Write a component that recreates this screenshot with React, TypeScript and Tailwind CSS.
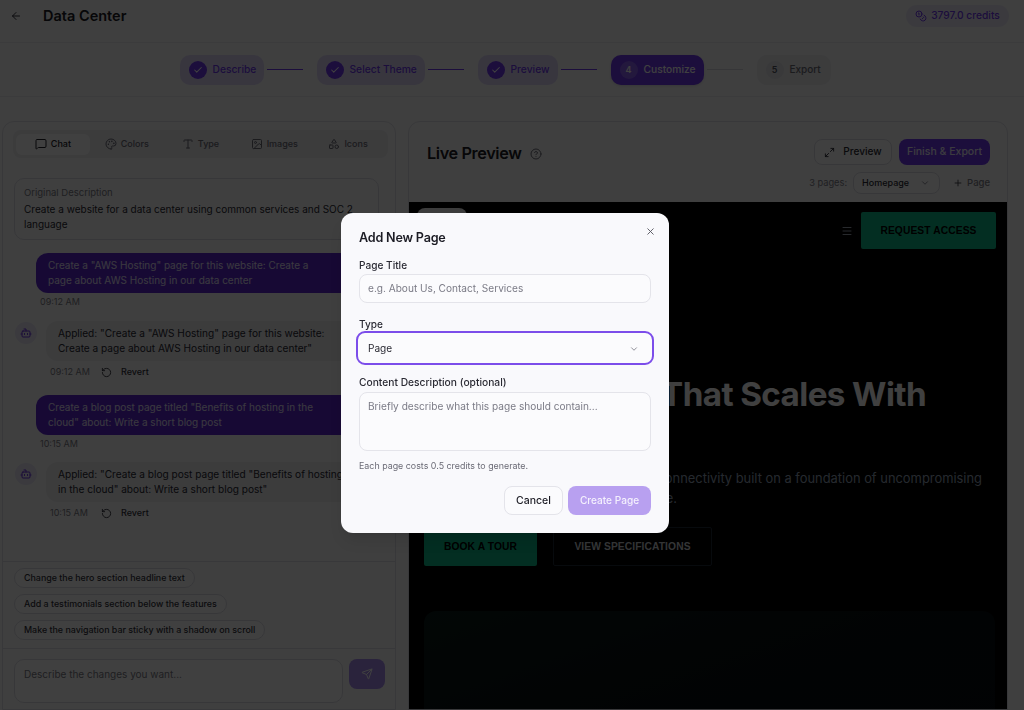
import { ArrowLeft, Bot, Check, ChevronDown, CircleHelp, Coins, Image, Maximize2, Menu, MessageSquare, Palette, Plus, RotateCcw, Send, Shapes, Type, X } from "lucide-react";

const TABS = [
  { label: "Chat", icon: MessageSquare },
  { label: "Colors", icon: Palette },
  { label: "Type", icon: Type },
  { label: "Images", icon: Image },
  { label: "Icons", icon: Shapes },
];

const STEPS = [
  { n: 1, label: "Describe", state: "done", width: "w-[84px]" },
  { n: 2, label: "Select Theme", state: "done", width: "w-[108px]" },
  { n: 3, label: "Preview", state: "done", width: "w-[80px]" },
  { n: 4, label: "Customize", state: "active", width: "w-[93px]" },
  { n: 5, label: "Export", state: "todo", width: "w-[74px]" },
];

const SUGGESTIONS = [
  "Change the hero section headline text",
  "Add a testimonials section below the features",
  "Make the navigation bar sticky with a shadow on scroll",
];

function Stepper() {
  return (
    <div className="flex h-[54px] items-center justify-center border-b border-[#ececf0] pr-[14px]">
      {STEPS.map((step, i) => (
        <div key={step.n} className="flex items-center">
          <div
            className={
              "flex h-[30px] items-center gap-[6px] rounded-[10px] pl-[9px] font-medium " +
              step.width +
              (step.state === "done" ? " bg-[#dfd8f8] text-[10.25px] text-[#7038f0]" : "") +
              (step.state === "active" ? " bg-[#7038f0] text-[10.25px] text-white shadow-sm" : "") +
              (step.state === "todo" ? " bg-[#ededf0] text-[10px] text-[#6b6b76]" : "")
            }
          >
            {step.state === "done" ? (
              <span className="flex h-[18px] w-[18px] items-center justify-center rounded-full bg-[#7038f0] text-white">
                <Check size={10} strokeWidth={2.5} />
              </span>
            ) : (
              <span
                className={
                  "flex h-[18px] w-[18px] items-center justify-center rounded-full text-[9px] font-semibold " +
                  (step.state === "active" ? "bg-white/20 text-white" : "bg-[#e2e2e6] text-[#55555f]")
                }
              >
                {step.n}
              </span>
            )}
            {step.label}
          </div>
          {i < STEPS.length - 1 && (
            <div
              className={
                "ml-[3px] mr-[14px] h-px w-[36px] " + (i < 3 ? "bg-[#7038f0]" : "bg-[#d8d8de]")
              }
            />
          )}
        </div>
      ))}
    </div>
  );
}

function UserMessage({ lines, time }: { lines: string[]; time: string }) {
  return (
    <div className="ml-[21px] mr-[18px]">
      <div className="rounded-[12px] bg-[#5b27d0] px-[12px] py-[5px] text-[10px] leading-[15px] text-[#e9e2fb]">
        {lines.map((line) => (
          <div key={line}>{line}</div>
        ))}
      </div>
      <div className="mt-[3px] pl-[4px] text-[9px] leading-[12px] text-[#7b7b86]">{time}</div>
    </div>
  );
}

function BotMessage({ lines, time, className }: { lines: string[]; time: string; className: string }) {
  return (
    <div className={"flex gap-[9px] pr-[18px] " + className}>
      <div className="mt-px flex h-[22px] w-[22px] shrink-0 items-center justify-center rounded-full bg-[#e9e6f6] text-[#6a2fe0]">
        <Bot size={12} />
      </div>
      <div className="flex-1">
        <div className="rounded-[12px] bg-[#ededf0] px-[12px] py-[5px] text-[10.1px] leading-[15px] text-[#2a2a33]">
          {lines.map((line) => (
            <div key={line}>{line}</div>
          ))}
        </div>
        <div className="mt-[5px] flex items-center pl-[4px] text-[9px] leading-[12px] text-[#7b7b86]">
          <span className="w-[51px]">{time}</span>
          <RotateCcw size={11} className="text-[#33333c]" />
          <span className="ml-[9px] font-medium text-[#33333c]">Revert</span>
        </div>
      </div>
    </div>
  );
}

function ChatPanel() {
  return (
    <div className="ml-[2px] flex h-[589px] w-[394px] flex-col rounded-t-[12px] border border-[#e0e0e6] bg-[#fbfbfc]">
      <div className="px-[10px] pt-[8px]">
        <div className="grid h-[28px] w-[375px] grid-cols-5 items-center rounded-[8px] bg-[#ededf0] px-[3px]">
          {TABS.map(({ label, icon: Icon }, i) => (
            <div
              key={label}
              className={
                "flex h-[21px] items-center justify-center gap-[4px] rounded-[6px] text-[9px] font-medium " +
                (i === 0 ? "bg-white text-[#22222a]" : "text-[#6b6b76]")
              }
            >
              <Icon size={12} />
              {label}
            </div>
          ))}
        </div>
      </div>
      <div className="mx-[11px] mt-[20px] h-[62px] w-[365px] rounded-[10px] border border-[#dcdce4] px-[9px] pt-[7px]">
        <div className="text-[9.5px] leading-[14px] text-[#7b7b86]">Original Description</div>
        <div className="mt-[2px] text-[10px] leading-[15px] text-[#2a2a33]">
          Create a website for a data center using common services and SOC 2 language
        </div>
      </div>
      <div className="mt-[13px] flex flex-1 flex-col gap-[13px] pl-[12px]">
        <UserMessage
          time="09:12 AM"
          lines={['Create a "AWS Hosting" page for this website: Create a', "page about AWS Hosting in our data center"]}
        />
        <BotMessage
          className=""
          time="09:12 AM"
          lines={['Applied: "Create a "AWS Hosting" page for this website:', 'Create a page about AWS Hosting in our data center"']}
        />
        <div className="mt-[4px]">
          <UserMessage
            time="10:15 AM"
            lines={['Create a blog post page titled "Benefits of hosting in the', 'cloud" about: Write a short blog post']}
          />
        </div>
        <BotMessage
          className="-mt-px"
          time="10:15 AM"
          lines={['Applied: "Create a blog post page titled "Benefits of hosting', 'in the cloud" about: Write a short blog post"']}
        />
      </div>
      <div className="flex flex-col items-start gap-[6px] border-t border-[#e0e0e6] px-[11px] pb-[8px] pt-[6px]">
        {SUGGESTIONS.map((text) => (
          <div
            key={text}
            className="flex h-[20px] items-center rounded-full border border-[#dcdce4] bg-white px-[9px] text-[8.9px] font-medium text-[#33333c]"
          >
            {text}
          </div>
        ))}
      </div>
      <div className="flex h-[61px] gap-[6px] border-t border-[#e0e0e6] px-[11px] pt-[10px]">
        <div className="h-[44px] w-[329px] shrink-0 rounded-[10px] border border-[#dcdce4] bg-white px-[9px] pt-[7px] text-[10px] leading-[15px] text-[#7b7b86]">
          Describe the changes you want...
        </div>
        <div className="flex h-[30px] w-[36px] shrink-0 items-center justify-center rounded-[8px] bg-[#a68bef] text-white">
          <Send size={12} />
        </div>
      </div>
    </div>
  );
}

function PreviewPanel() {
  return (
    <div className="flex h-[589px] w-[600px] flex-col rounded-t-[12px] border border-[#e0e0e6] bg-[#fbfbfc]">
      <div className="flex h-[80px] justify-between pl-[18px] pr-[17px]">
        <div className="flex h-[63px] items-center gap-[9px]">
          <span className="text-[16.3px] font-semibold tracking-[-0.4px] text-[#1c1c24]">Live Preview</span>
          <CircleHelp size={12} className="text-[#6b6b76]" />
        </div>
        <div className="flex flex-col items-end pt-[17px]">
          <div className="flex gap-[7px]">
            <div className="flex h-[26px] w-[78px] items-center justify-center gap-[8px] rounded-[8px] border border-[#dcdce4] bg-white text-[10.1px] font-medium text-[#2a2a33]">
              <Maximize2 size={11} />
              Preview
            </div>
            <div className="flex h-[26px] w-[91px] items-center justify-center rounded-[8px] bg-[#7038f0] text-[10.5px] font-medium text-[#efeafc]">
              Finish &amp; Export
            </div>
          </div>
          <div className="mt-[7px] flex items-center text-[9.25px] text-[#7b7b86]">
            <span>3 pages:</span>
            <div className="ml-[6px] flex h-[22px] w-[87px] items-center justify-between rounded-[8px] border border-[#dcdce4] bg-white pl-[8px] pr-[9px] text-[9px] font-medium text-[#2a2a33]">
              Homepage
              <ChevronDown size={10} className="text-[#7b7b86]" />
            </div>
            <span className="ml-[13px] flex items-center gap-[4px] text-[9.5px] font-medium">
              <Plus size={10} className="text-[#33333c]" />
              Page
            </span>
          </div>
        </div>
      </div>
      <div className="relative flex-1 overflow-hidden bg-black">
        <div className="absolute left-[8px] top-[6px] h-[40px] w-[50px] rounded-[8px] bg-[#ededed]" />
        <div className="flex items-center justify-end pr-[11px] pt-[10px]">
          <Menu size={12} className="mr-[8px] text-[#9ca3af]" />
          <div className="flex h-[37px] w-[135px] items-center justify-center rounded-[2px] bg-[#0fb886] text-[10.25px] font-bold tracking-[0.1px] text-black [font-family:'Liberation_Sans',sans-serif]">
            REQUEST ACCESS
          </div>
        </div>
        <div className="ml-[28px] mt-[125px] whitespace-nowrap text-[33.2px] font-bold leading-[40px] tracking-[-0.6px] text-white">
          Infrastructure That Scales With
        </div>
        <div className="ml-[48px] mt-[55px] whitespace-nowrap text-[12.9px] leading-[20px] text-[#94a3b8]">
          <div>Enterprise colocation, cloud and connectivity built on a foundation of uncompromising</div>
          <div>security and operational excellence.</div>
        </div>
        <div className="ml-[15px] mt-[18px] flex gap-[16px] text-[10.25px] font-bold tracking-[0.1px] [font-family:'Liberation_Sans',sans-serif]">
          <div className="flex h-[39px] w-[113px] items-center justify-center rounded-[2px] bg-[#0fb886] text-black">
            BOOK A TOUR
          </div>
          <div className="flex h-[39px] w-[159px] items-center justify-center rounded-[2px] border border-[#1f2937] text-[#d1d5db]">
            VIEW SPECIFICATIONS
          </div>
        </div>
        <div className="ml-[15px] mr-[12px] mt-[45px] h-[200px] rounded-t-[12px] bg-gradient-to-br from-[#0a1a18] via-[#070d10] to-[#080a10]" />
      </div>
    </div>
  );
}

function AddPageModal() {
  return (
    <div className="absolute left-[341px] top-[213px] h-[320px] w-[328px] rounded-[12px] bg-[#f9f9fc] px-[18px] pt-[16px] text-[#1c1c24] shadow-lg">
      <X size={11} className="absolute right-[13px] top-[13px] text-[#55555f]" />
      <div className="text-[12.6px] font-semibold leading-[17px] tracking-[-0.2px]">Add New Page</div>
      <div className="mt-[12px] text-[10.1px] font-medium leading-[14px] text-[#2a2a33]">Page Title</div>
      <div className="mt-[2px] flex h-[29px] items-center rounded-[8px] border border-[#e4e4ea] bg-[#fbfbfd] px-[8px] pt-px text-[10.1px] text-[#7b7b86]">
        e.g. About Us, Contact, Services
      </div>
      <div className="mt-[14px] text-[10.1px] font-medium leading-[14px] text-[#2a2a33]">Type</div>
      <div className="-mx-[3px] flex h-[34px] items-center justify-between rounded-[9px] border-2 border-[#7c4dea] bg-[#fbfbfd] pl-[10px] pr-[13px] pt-px text-[10.1px] text-[#2a2a33]">
        Page
        <ChevronDown size={10} className="text-[#7b7b86]" />
      </div>
      <div className="mt-[10px] text-[10.25px] font-medium leading-[14px] text-[#2a2a33]">Content Description (optional)</div>
      <div className="mt-[3px] h-[59px] rounded-[8px] border border-[#e4e4ea] bg-[#fbfbfd] px-[8px] pt-[6px] text-[10.1px] leading-[15px] text-[#7b7b86]">
        Briefly describe what this page should contain...
      </div>
      <div className="mt-[9px] text-[8.9px] leading-[12px] text-[#6b6b76]">Each page costs 0.5 credits to generate.</div>
      <div className="mt-[14px] flex justify-end gap-[5px]">
        <div className="flex h-[29px] w-[59px] items-center justify-center rounded-[8px] border border-[#e4e4ea] bg-[#fbfbfd] text-[10.5px] font-medium">
          Cancel
        </div>
        <div className="flex h-[29px] w-[83px] items-center justify-center rounded-[8px] bg-[#b8a0f0] text-[10.1px] font-medium text-[#f4f0fd]">
          Create Page
        </div>
      </div>
    </div>
  );
}

export default function App() {
  return (
    <div className="relative h-[710px] w-[1024px] overflow-hidden bg-[#fafafb] font-['Inter',sans-serif]">
      <div className="flex h-[43px] items-start justify-between border-b border-[#ececf0] pl-[10px] pr-[15px] pt-[5px]">
        <div className="flex h-[22px] items-center gap-[21px]">
          <ArrowLeft size={12} className="text-[#33333c]" />
          <span className="text-[14.5px] font-semibold text-[#1c1c24]">Data Center</span>
        </div>
        <div className="flex h-[22px] w-[103px] items-center justify-center gap-[4px] rounded-full bg-[#ebe8f7] text-[10.25px] font-medium text-[#7038f0]">
          <Coins size={12} />
          3797.0 credits
        </div>
      </div>
      <Stepper />
      <div className="flex gap-[12px] pt-[24px]">
        <ChatPanel />
        <PreviewPanel />
      </div>
      <div className="absolute inset-0 bg-black/75 backdrop-blur-[0.6px]" />
      <AddPageModal />
    </div>
  );
}
